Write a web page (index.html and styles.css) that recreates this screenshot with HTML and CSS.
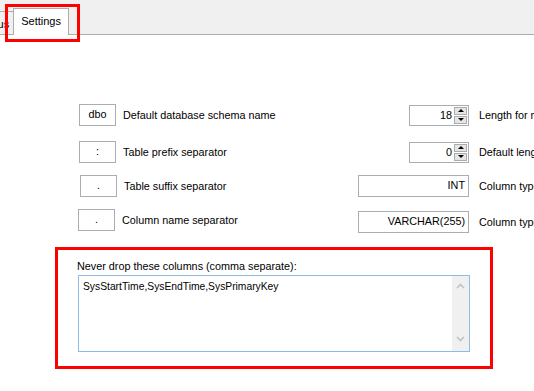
FILE: index.html
```html
<!DOCTYPE html>
<html>

<head>
    <title>Settings</title>
    <link rel="stylesheet" href="styles.css">
</head>

<body>

    <div class="tabbar">
        <div class="tab tab-prev">Status</div>
        <div class="tab tab-active">Settings</div>
        <div class="mark-tab"></div>
    </div>

    <div class="content">
        <div class="fields">
            <div class="left">
                <div class="row">
                    <div class="box">dbo</div>
                    <span>Default database schema name</span>
                </div>
                <div class="row">
                    <div class="box">:</div>
                    <span>Table prefix separator</span>
                </div>
                <div class="row row-shift">
                    <div class="box">.</div>
                    <span>Table suffix separator</span>
                </div>
                <div class="row row-back">
                    <div class="box">.</div>
                    <span>Column name separator</span>
                </div>
            </div>

            <div class="right">
                <div class="rrow">
                    <div class="cell">
                        <div class="spin">
                            <span class="spin-value">18</span>
                            <div class="spin-btns">
                                <div class="spin-btn"><span class="tri-up"></span></div>
                                <div class="spin-btn"><span class="tri-down"></span></div>
                            </div>
                        </div>
                    </div>
                    <span class="rlabel">Length for max columns</span>
                </div>
                <div class="rrow">
                    <div class="cell">
                        <div class="spin">
                            <span class="spin-value">0</span>
                            <div class="spin-btns">
                                <div class="spin-btn"><span class="tri-up"></span></div>
                                <div class="spin-btn"><span class="tri-down"></span></div>
                            </div>
                        </div>
                    </div>
                    <span class="rlabel">Default length</span>
                </div>
                <div class="rrow">
                    <div class="cell">
                        <div class="text-box">INT</div>
                    </div>
                    <span class="rlabel">Column type for number</span>
                </div>
                <div class="rrow rrow-last">
                    <div class="cell">
                        <div class="text-box">VARCHAR(255)</div>
                    </div>
                    <span class="rlabel">Column type for text</span>
                </div>
            </div>
        </div>

        <div class="group">
            <div class="group-label">Never drop these columns (comma separate):</div>
            <div class="memo">
                <div class="memo-text">SysStartTime,SysEndTime,SysPrimaryKey</div>
                <div class="scrollbar">
                    <svg width="9" height="6" viewBox="0 0 9 6"><path d="M1 5 L4.5 1.5 L8 5" fill="none" stroke="#c2c2c2" stroke-width="1.6"/></svg>
                    <svg width="9" height="6" viewBox="0 0 9 6"><path d="M1 1 L4.5 4.5 L8 1" fill="none" stroke="#c2c2c2" stroke-width="1.6"/></svg>
                </div>
            </div>
        </div>
    </div>

</body>

</html>
```

FILE: styles.css
```css
body {
    margin: 0;
    width: 534px;
    height: 391px;
    overflow: hidden;
    background: #ffffff;
    font-family: "Liberation Sans", Arial, sans-serif;
    font-size: 11px;
    color: #000000;
    white-space: nowrap;
}

/* tabs */
.tabbar {
    position: relative;
    height: 34px;
    background: #f0f0f0;
    border-bottom: 1px solid #adadad;
    display: flex;
    align-items: flex-end;
}

.tab {
    box-sizing: border-box;
    border: 1px solid #adadad;
    border-bottom: none;
    line-height: 13px;
}

.tab-prev {
    height: 23px;
    margin-left: -27px;
    padding: 6px 4px 0 4px;
    background: #f0f0f0;
}

.tab-active {
    height: 27px;
    margin-bottom: -1px;
    margin-left: -1px;
    padding: 6px 7px 0 7px;
    width: 56px;
    background: #ffffff;
}

.mark-tab {
    position: absolute;
    left: 5px;
    top: 4px;
    width: 75px;
    height: 38px;
    box-sizing: border-box;
    border: 3px solid #ff0000;
}

/* fields */
.content {
    padding-top: 69px;
}

.fields {
    display: flex;
}

.left {
    flex: none;
    box-sizing: border-box;
    padding-left: 79px;
    width: 358px;
    display: flex;
    flex-direction: column;
    gap: 15px;
    font-size: 10.8px;
}

.row {
    display: flex;
    align-items: center;
    gap: 7px;
    height: 22px;
}

.row + .row + .row {
    margin-top: -3px;
}

.row-shift {
    margin-left: 1px;
}

.row-back {
    margin-left: -1px;
}

.box {
    box-sizing: border-box;
    width: 37px;
    height: 22px;
    border: 1px solid #abadb3;
    text-align: center;
    line-height: 19px;
}

.right {
    flex: none;
    display: flex;
    flex-direction: column;
    gap: 15px;
    font-size: 10.8px;
}

.rrow {
    display: flex;
    align-items: center;
    height: 22px;
}

.rrow:nth-child(3) {
    margin-top: -3px;
}

.rrow-last {
    margin-top: -1px;
}

.cell {
    width: 111px;
    display: flex;
    justify-content: flex-end;
}

.rlabel {
    margin-left: 10px;
}

.text-box {
    box-sizing: border-box;
    width: 111px;
    height: 22px;
    border: 1px solid #abadb3;
    text-align: right;
    padding-right: 3px;
    line-height: 19px;
}

.spin {
    box-sizing: border-box;
    width: 60px;
    height: 21px;
    border: 1px solid #abadb3;
    display: flex;
    align-items: stretch;
}

.spin-value {
    flex: 1;
    text-align: right;
    padding-right: 2px;
    line-height: 18px;
}

.spin-btns {
    width: 13px;
    display: flex;
    flex-direction: column;
    gap: 1px;
    padding: 1px 1px 1px 0;
}

.spin-btn {
    flex: 1;
    background: #e5e5e5;
    border: 1px solid #acacac;
    display: flex;
    align-items: center;
    justify-content: center;
}

.tri-up {
    width: 0;
    height: 0;
    border-left: 3px solid transparent;
    border-right: 3px solid transparent;
    border-bottom: 3px solid #000000;
}

.tri-down {
    width: 0;
    height: 0;
    border-left: 3px solid transparent;
    border-right: 3px solid transparent;
    border-top: 3px solid #000000;
}

/* never drop group */
.group {
    box-sizing: border-box;
    margin-top: 14px;
    margin-left: 55px;
    width: 438px;
    height: 122px;
    border: 3px solid #ff0000;
    padding: 10px 0 0 20px;
}

.group-label {
    line-height: 13px;
    margin-left: -1px;
    font-size: 10.8px;
}

.memo {
    box-sizing: border-box;
    margin-top: 2px;
    width: 392px;
    height: 77px;
    border: 1px solid #8fbbe8;
    display: flex;
}

.memo-text {
    flex: 1;
    padding: 4px 0 0 4px;
    line-height: 14px;
    font-size: 10.3px;
}

.scrollbar {
    width: 17px;
    background: #f0f0f0;
    display: flex;
    flex-direction: column;
    align-items: center;
    justify-content: space-between;
    padding: 7px 0 9px 0;
}
```
